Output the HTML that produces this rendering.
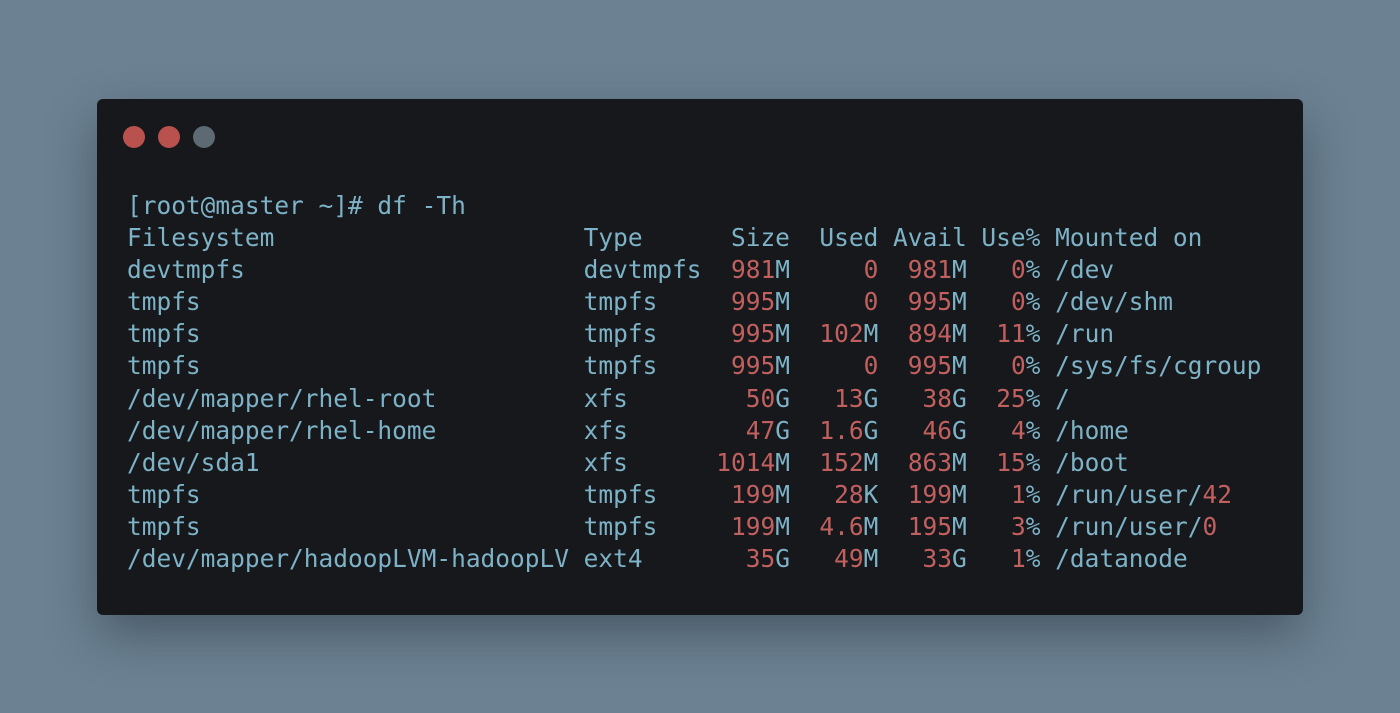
<!DOCTYPE html>
<html><head><meta charset="utf-8"><style>
html,body{margin:0;padding:0;}
body{width:1400px;height:713px;background:#6c8292;position:relative;overflow:hidden;}
.win{position:absolute;left:97px;top:99px;width:1206px;height:516px;background:#16181b;border-radius:6px;box-shadow:0 20px 50px rgba(30,40,50,.45);}
.dot{position:absolute;top:126px;width:22px;height:22px;border-radius:50%;}
pre{position:absolute;left:127px;top:190px;margin:0;font-family:"DejaVu Sans Mono","Liberation Mono",monospace;font-size:24.47px;line-height:32.1px;color:#7db2c7;}
b{font-weight:normal;color:#c2605f;}
</style></head><body>
<div class="win"></div>
<div class="dot" style="left:123px;background:#b9524f"></div>
<div class="dot" style="left:158px;background:#b9524f"></div>
<div class="dot" style="left:193px;background:#5d6a73"></div>
<pre>[root@master ~]# df -Th
Filesystem                     Type      Size  Used Avail Use% Mounted on
devtmpfs                       devtmpfs  <b>981</b>M     <b>0</b>  <b>981</b>M   <b>0</b>% /dev
tmpfs                          tmpfs     <b>995</b>M     <b>0</b>  <b>995</b>M   <b>0</b>% /dev/shm
tmpfs                          tmpfs     <b>995</b>M  <b>102</b>M  <b>894</b>M  <b>11</b>% /run
tmpfs                          tmpfs     <b>995</b>M     <b>0</b>  <b>995</b>M   <b>0</b>% /sys/fs/cgroup
/dev/mapper/rhel-root          xfs        <b>50</b>G   <b>13</b>G   <b>38</b>G  <b>25</b>% /
/dev/mapper/rhel-home          xfs        <b>47</b>G  <b>1.6</b>G   <b>46</b>G   <b>4</b>% /home
/dev/sda1                      xfs      <b>1014</b>M  <b>152</b>M  <b>863</b>M  <b>15</b>% /boot
tmpfs                          tmpfs     <b>199</b>M   <b>28</b>K  <b>199</b>M   <b>1</b>% /run/user/<b>42</b>
tmpfs                          tmpfs     <b>199</b>M  <b>4.6</b>M  <b>195</b>M   <b>3</b>% /run/user/<b>0</b>
/dev/mapper/hadoopLVM-hadoopLV ext4       <b>35</b>G   <b>49</b>M   <b>33</b>G   <b>1</b>% /datanode</pre>
</body></html>
